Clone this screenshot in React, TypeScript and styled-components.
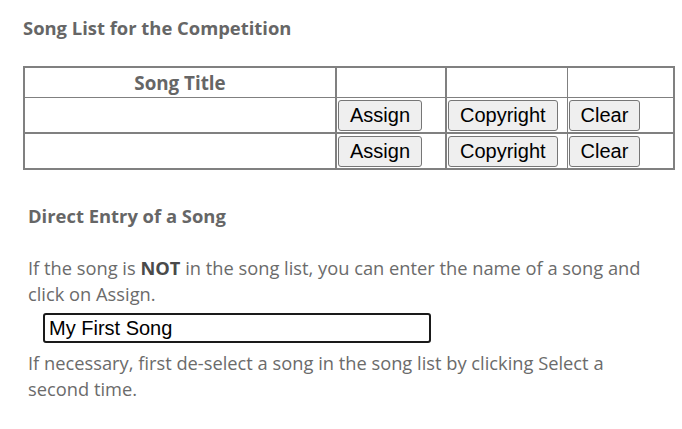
import styled, { createGlobalStyle } from "styled-components"

const GlobalStyle = createGlobalStyle`
  body {
    margin: 0;
    background: #fff;
    font-family: "Open Sans", "Noto Sans", sans-serif;
    color: #666;
  }
`

const Page = styled.div`
  padding: 16px 0 0 23px;
`

const Heading = styled.h4<{ $indent?: number }>`
  margin: 0;
  padding-left: ${p => p.$indent || 0}px;
  font-size: 18.4px;
  line-height: 24px;
  font-weight: 700;
  color: #666;
`

const SongTable = styled.table`
  margin-top: 26px;
  border-collapse: collapse;
  table-layout: fixed;
  width: 650px;
  border: 2px solid #808080;
`

const HeadCell = styled.th<{ $left?: number }>`
  height: 29px;
  padding: 0;
  border: 1px solid #808080;
  border-left-width: ${p => p.$left || 1}px;
  font-size: 18.8px;
  font-weight: 700;
  color: #666;
  text-align: center;
`

const Cell = styled.td<{ $left?: number; $top?: number }>`
  height: 34px;
  padding: 0 1px;
  border: 1px solid #808080;
  border-left-width: ${p => p.$left || 1}px;
  border-top-width: ${p => p.$top || 1}px;
`

const Button = styled.button`
  font-family: "Liberation Sans", Arial, sans-serif;
  font-size: 20px;
  line-height: 23px;
  padding: 3px 11px;
  color: #000;
  background: #efefef;
  border: 1px solid #767676;
  border-radius: 3px;
`

const Section = styled.div`
  margin-top: 34px;
  padding-left: 5px;
`

const Para = styled.p`
  margin: 0;
  font-size: 18.3px;
  line-height: 26px;
  color: #6b6b6b;
  width: 640px;

  b {
    color: #4a4a4a;
  }
`

const NameInput = styled.input`
  display: block;
  margin: 6px 0 7px 15px;
  width: 376px;
  height: 26px;
  padding: 0 4px;
  box-sizing: content-box;
  font-family: "Liberation Sans", Arial, sans-serif;
  font-size: 20px;
  color: #000;
  border: 2px solid #1a1a1a;
  border-radius: 3px;
  outline: none;
`

const rows = [0, 1]

export default function App() {
  return (
    <Page>
      <GlobalStyle />
      <Heading>Song List for the Competition</Heading>
      <SongTable>
        <colgroup>
          <col style={{ width: 312 }} />
          <col style={{ width: 110 }} />
          <col style={{ width: 121 }} />
          <col style={{ width: 107 }} />
        </colgroup>
        <thead>
          <tr>
            <HeadCell>Song Title</HeadCell>
            <HeadCell $left={2}></HeadCell>
            <HeadCell $left={2}></HeadCell>
            <HeadCell></HeadCell>
          </tr>
        </thead>
        <tbody>
          {rows.map(i => (
            <tr key={i}>
              <Cell $top={i ? 2 : 1}></Cell>
              <Cell $left={2} $top={i ? 2 : 1}><Button>Assign</Button></Cell>
              <Cell $left={2} $top={i ? 2 : 1}><Button>Copyright</Button></Cell>
              <Cell $top={i ? 2 : 1}><Button>Clear</Button></Cell>
            </tr>
          ))}
        </tbody>
      </SongTable>
      <Section>
        <Heading>Direct Entry of a Song</Heading>
        <Para style={{ marginTop: 27 }}>
          If the song is <b>NOT</b> in the song list, you can enter the name of a song and click on Assign.
        </Para>
        <NameInput defaultValue="My First Song" autoFocus />
        <Para>
          If necessary, first de-select a song in the song list by clicking Select a second time.
        </Para>
      </Section>
    </Page>
  )
}
